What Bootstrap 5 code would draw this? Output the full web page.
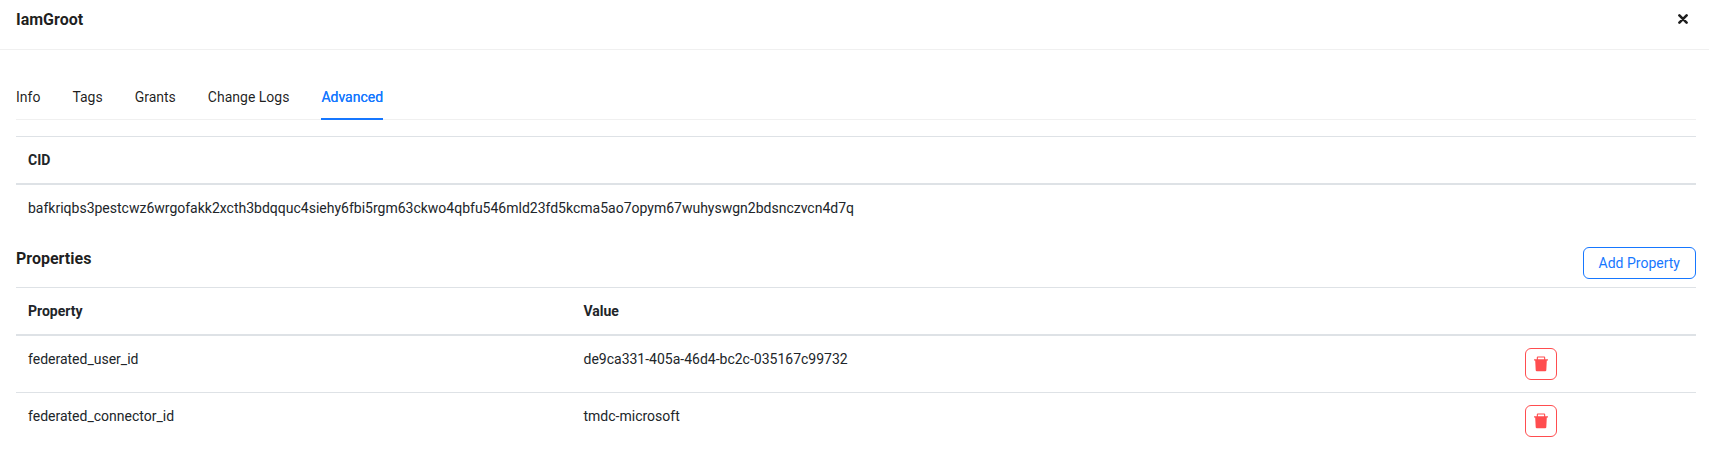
<!DOCTYPE html>
<html lang="en">
<head>
<meta charset="utf-8">
<meta name="viewport" content="width=device-width, initial-scale=1">
<title>IamGroot</title>
<link href="https://cdn.jsdelivr.net/npm/bootstrap@5.3.0/dist/css/bootstrap.min.css" rel="stylesheet">
<style>
  body { font: 14px/22px Roboto, sans-serif; color: #212529; background: #fff; }
  .panel-head { height: 50px; padding: 7px 21px 0 16px; border-bottom: 1px solid #f0f0f0; }
  .panel-title, .section-title { font-size: 16px; line-height: 24px; font-weight: 700; color: rgba(0,0,0,.88); }
  .panel-title { padding-top: 1px; }
  .close-icon { border: 0; background: none; padding: 0; width: 10px; height: 24px; display: flex; align-items: center; }
  .panel-main { padding: 24px 13px 0 16px; }
  .tab-row { gap: 32px; height: 46px; border-bottom: 1px solid #f0f0f0; margin-bottom: 16px; }
  .tab-row .nav-link { padding: 12px 0 0; height: 46px; color: rgba(0,0,0,.88); }
  .tab-row .nav-link.active { color: #1677ff; border-bottom: 2px solid #1677ff; text-shadow: 0 0 .25px currentColor; }
  .data-table { table-layout: fixed; margin: 0; border-collapse: separate; border-spacing: 0; }
  .data-table > :not(caption) > * > * { padding: 12px; color: #212529; border: 0 solid #dee2e6; box-shadow: none; }
  .data-table > thead > tr > th { border-top-width: 1px; border-bottom-width: 2px; font-weight: 700; }
  .data-table > tbody > tr + tr > td { border-top-width: 1px; }
  .section-head { height: 56px; padding-top: 16px; }
  .btn-add, .btn-trash { height: 32px; border-radius: 6px; font-size: 14px; line-height: 22px; }
  .btn-add { padding: 4px 15px; color: #1677ff; border-color: #1677ff; }
  .btn-trash { width: 32px; padding: 0; color: #ff4d4f; border-color: #ff4d4f; }
</style>
</head>
<body>
<header class="panel-head d-flex justify-content-between align-items-start">
  <h1 class="panel-title m-0">IamGroot</h1>
  <button class="close-icon" type="button" aria-label="Close">
    <svg width="10" height="10" viewBox="0 0 10 10"><path d="M1.4 1.4 8.6 8.6M8.6 1.4 1.4 8.6" stroke="#1f1f1f" stroke-width="2.6" stroke-linecap="round"/></svg>
  </button>
</header>
<main class="panel-main">
  <nav class="nav tab-row">
    <a class="nav-link" href="#">Info</a>
    <a class="nav-link" href="#">Tags</a>
    <a class="nav-link" href="#">Grants</a>
    <a class="nav-link" href="#">Change Logs</a>
    <a class="nav-link active" href="#">Advanced</a>
  </nav>
  <table class="table data-table">
    <thead><tr><th>CID</th></tr></thead>
    <tbody><tr><td>bafkriqbs3pestcwz6wrgofakk2xcth3bdqquc4siehy6fbi5rgm63ckwo4qbfu546mld23fd5kcma5ao7opym67wuhyswgn2bdsnczvcn4d7q</td></tr></tbody>
  </table>
  <div class="section-head d-flex justify-content-between align-items-start">
    <h2 class="section-title m-0">Properties</h2>
    <button class="btn btn-add" type="button">Add Property</button>
  </div>
  <table class="table data-table">
    <colgroup><col style="width:555.5px"><col style="width:941.5px"><col></colgroup>
    <thead><tr><th>Property</th><th>Value</th><th></th></tr></thead>
    <tbody>
      <tr><td>federated_user_id</td><td>de9ca331-405a-46d4-bc2c-035167c99732</td>
        <td><button class="btn btn-trash d-flex align-items-center justify-content-center" type="button" aria-label="Delete">
          <svg width="14" height="16" viewBox="0 0 14 16" fill="currentColor"><path d="M2.8 3.3V1.5q0-1 1-1h6.4q1 0 1 1v1.8h2.5q.3 0 .3.3v.8h-1.2l-.5 9.8q-.1 1.1-1.1 1.1H2.8q-1 0-1.1-1.1l-.5-9.8H0v-.8q0-.3.3-.3zM3.9 3.3h6.2V1.6H3.9z" fill-rule="evenodd"/></svg>
        </button></td></tr>
      <tr><td>federated_connector_id</td><td>tmdc-microsoft</td>
        <td><button class="btn btn-trash d-flex align-items-center justify-content-center" type="button" aria-label="Delete">
          <svg width="14" height="16" viewBox="0 0 14 16" fill="currentColor"><path d="M2.8 3.3V1.5q0-1 1-1h6.4q1 0 1 1v1.8h2.5q.3 0 .3.3v.8h-1.2l-.5 9.8q-.1 1.1-1.1 1.1H2.8q-1 0-1.1-1.1l-.5-9.8H0v-.8q0-.3.3-.3zM3.9 3.3h6.2V1.6H3.9z" fill-rule="evenodd"/></svg>
        </button></td></tr>
    </tbody>
  </table>
</main>
<script src="https://cdn.jsdelivr.net/npm/bootstrap@5.3.0/dist/js/bootstrap.bundle.min.js"></script>
</body>
</html>
